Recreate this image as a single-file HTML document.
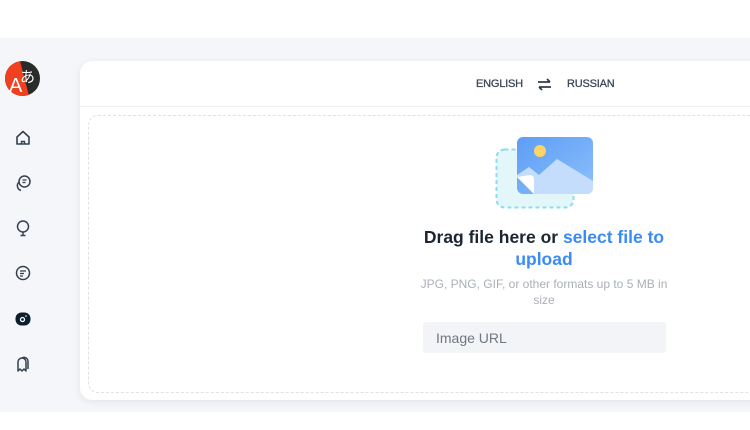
<!DOCTYPE html>
<html><head><meta charset="utf-8"><style>
*{margin:0;padding:0;box-sizing:border-box}
body{width:750px;height:430px;background:#fff;font-family:"Liberation Sans","Noto Sans CJK JP",sans-serif;position:relative;overflow:hidden}
.bg{position:absolute;left:0;top:38px;width:750px;height:374px;background:#f5f6fa}
.card{position:absolute;left:80px;top:61px;width:690px;height:339px;background:#fff;border-radius:12px;box-shadow:0 2px 8px rgba(0,0,0,.08)}
.hdr{position:absolute;left:80px;top:61px;width:670px;height:46px;border-bottom:1px solid #eef0f4}
.lang{position:absolute;top:78px;font-size:11px;color:#3d4856;font-weight:normal;letter-spacing:-.2px;-webkit-text-stroke:.3px #3d4856}
.dash{position:absolute;left:88px;top:115px;width:680px;height:278px;border:1.5px dashed #dde1e8;border-radius:10px}
.ic{position:absolute;left:14px;width:18px;height:18px}
.t1{position:absolute;left:404px;width:280px;text-align:center;top:226px;font-size:17.5px;font-weight:bold;color:#1c2530;line-height:22px}
.t1 span{color:#3b8bf5}
.t2{position:absolute;left:413px;width:262px;text-align:center;top:276px;font-size:12px;color:#aab0b8;line-height:16px}
.inp{position:absolute;left:423px;top:322px;width:243px;height:31px;background:#f3f4f7;border-radius:3px;font-size:14px;color:#707780;padding:8px 13px}
</style></head><body>
<div class="bg"></div>
<div class="card"></div>
<div class="hdr"></div>
<div class="lang" style="left:476px">ENGLISH</div>
<svg style="position:absolute;left:537px;top:78px" width="15" height="13" viewBox="0 0 15 13"><path d="M1 4h12M10 1l3 3M14 9H2M5 12L2 9" stroke="#333d4a" stroke-width="1.8" fill="none"/></svg>
<div class="lang" style="left:567px">RUSSIAN</div>
<div class="dash"></div>
<svg style="position:absolute;left:5px;top:61px" width="35" height="35" viewBox="0 0 35 35"><defs><clipPath id="c"><circle cx="17.5" cy="17.5" r="17.5"/></clipPath></defs><g clip-path="url(#c)"><rect width="35" height="35" fill="#2a2a2a"/><path d="M0 0H15L24 35H0Z" fill="#f0401f"/></g><text x="4" y="31" font-size="20" fill="#fff" font-family="Liberation Sans">A</text><text x="15" y="21" font-size="15" fill="#fff" font-family="Noto Sans CJK JP">あ</text></svg>
<svg class="ic" style="top:129px" viewBox="0 0 18 18"><path d="M3 8L9 2.5 15 8V15H3Z" stroke="#34404e" stroke-width="1.6" fill="none" stroke-linejoin="round"/><path d="M7.5 15v-2.5h3V15" stroke="#34404e" stroke-width="1.4" fill="none"/></svg>
<svg class="ic" style="top:174px" viewBox="0 0 18 18"><circle cx="10.5" cy="7.5" r="5.5" stroke="#34404e" stroke-width="1.5" fill="none"/><path d="M5 8a5 5 0 0 0 2 8.5" stroke="#34404e" stroke-width="1.5" fill="none"/><path d="M8.5 6h4M8.5 8.5h3" stroke="#34404e" stroke-width="1.3"/></svg>
<svg class="ic" style="top:219px" viewBox="0 0 18 18"><circle cx="9" cy="7.5" r="5.5" stroke="#34404e" stroke-width="1.5" fill="none"/><path d="M9 13v3M6.5 16.5h5" stroke="#34404e" stroke-width="1.4"/></svg>
<svg class="ic" style="top:264px" viewBox="0 0 18 18"><circle cx="9" cy="9" r="6.5" stroke="#34404e" stroke-width="1.5" fill="none"/><path d="M6 7h6M6 9.5h4M6 12h3" stroke="#34404e" stroke-width="1.3"/></svg>
<svg class="ic" style="top:310px" viewBox="0 0 18 18"><rect x="1.5" y="2.5" width="15" height="13" rx="6" fill="#0d1e2e"/><circle cx="8.5" cy="9.5" r="2" stroke="#fff" stroke-width="1.3" fill="none"/><circle cx="12" cy="6" r=".8" fill="#fff"/></svg>
<svg class="ic" style="top:355px" viewBox="0 0 18 18"><path d="M4 16V7a4 4 0 0 1 8 0v9l-2-2-2 2-2-2z" stroke="#34404e" stroke-width="1.5" fill="none" stroke-linejoin="round"/><path d="M8 3a4 4 0 0 1 6 3.5V14" stroke="#34404e" stroke-width="1.5" fill="none"/></svg>
<svg style="position:absolute;left:494px;top:135px" width="102" height="75" viewBox="0 0 102 75"><defs><linearGradient id="g" x1="0" y1="0" x2="1" y2="1"><stop offset="0" stop-color="#5c9df5"/><stop offset="1" stop-color="#8ec0fb"/></linearGradient></defs><rect x="2.5" y="14.5" width="77" height="58" rx="8" fill="#e3f7fb" stroke="#8fdcec" stroke-width="2" stroke-dasharray="4 3"/><rect x="23" y="2" width="76" height="57" rx="6" fill="url(#g)"/><path d="M23 40l12-8 10 8 18-16 36 22V53a6 6 0 0 1-6 6H40L23 42Z" fill="#c5ddfc"/><path d="M23 42l17 17V44a4 4 0 0 0-4-4z" fill="#fff"/><circle cx="46" cy="16" r="6" fill="#fbd46a"/></svg>
<div class="t1">Drag file here or <span>select file to upload</span></div>
<div class="t2">JPG, PNG, GIF, or other formats up to 5 MB in size</div>
<div class="inp">Image URL</div>
</body></html>
